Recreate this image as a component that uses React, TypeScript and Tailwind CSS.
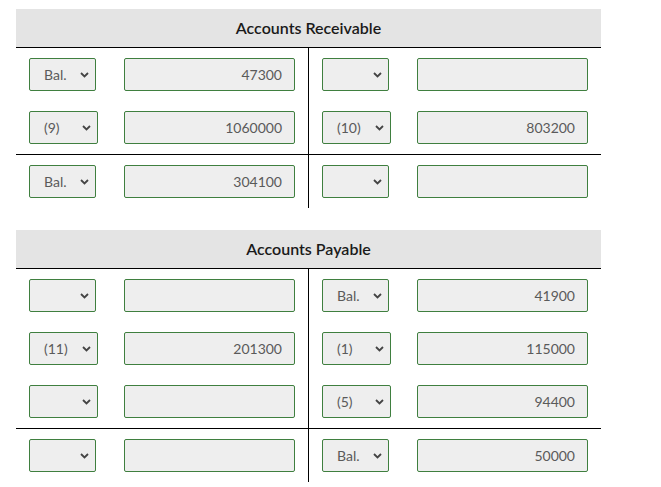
type Cell = { label: string; amount: string; wide?: boolean };
type Row = { left: Cell; right: Cell };

const empty: Cell = { label: '', amount: '' };

const receivable: Row[][] = [
  [
    { left: { label: 'Bal.', amount: '47300' }, right: empty },
    { left: { label: '(9)', amount: '1060000', wide: true }, right: { label: '(10)', amount: '803200', wide: true } },
  ],
  [{ left: { label: 'Bal.', amount: '304100' }, right: empty }],
];

const payable: Row[][] = [
  [
    { left: empty, right: { label: 'Bal.', amount: '41900' } },
    { left: { label: '(11)', amount: '201300', wide: true }, right: { label: '(1)', amount: '115000', wide: true } },
    { left: { ...empty, wide: true }, right: { label: '(5)', amount: '94400', wide: true } },
  ],
  [{ left: empty, right: { label: 'Bal.', amount: '50000' } }],
];

const Chevron = () => (
  <svg width="9" height="6" viewBox="0 0 9 6" className="shrink-0">
    <path d="M1 1l3.5 3.5L8 1" fill="none" stroke="#444" strokeWidth="1.8" />
  </svg>
);

const Entry = ({ cell }: { cell: Cell }) => (
  <div className="flex items-center justify-between">
    <div
      className={`flex h-[33px] items-center justify-between rounded-[2px] border border-[#3f7f3f] bg-[#eeeeee] pl-[14px] pr-[6px] text-[14px] text-[#5a5a5a] ${
        cell.wide ? 'w-[69px]' : 'w-[67px]'
      }`}
    >
      <span>{cell.label}</span>
      <Chevron />
    </div>
    <div className="flex h-[33px] w-[171px] items-center justify-end rounded-[2px] border border-[#3f7f3f] bg-[#eeeeee] pr-[12px] text-[14px] text-[#5a5a5a]">
      {cell.amount}
    </div>
  </div>
);

const TAccount = ({ title, blocks }: { title: string; blocks: Row[][] }) => (
  <div className="ml-[16px] w-[585px]">
    <div className="flex h-[38px] items-center justify-center bg-[#e4e4e4] text-[16px] font-semibold text-[#1a1a1a]">
      {title}
    </div>
    {blocks.map((rows, i) => (
      <div key={i} className="flex border-t border-black">
        <div className="flex w-[293px] flex-col gap-[20px] border-r border-black px-[13px] py-[10px]">
          {rows.map((row, j) => (
            <Entry key={j} cell={row.left} />
          ))}
        </div>
        <div className="flex w-[292px] flex-col gap-[20px] px-[13px] py-[10px]">
          {rows.map((row, j) => (
            <Entry key={j} cell={row.right} />
          ))}
        </div>
      </div>
    ))}
  </div>
);

export default function App() {
  return (
    <div className="flex min-h-[487px] w-[661px] flex-col gap-[22px] bg-white pt-[9px] font-['Lato','Liberation_Sans',sans-serif]">
      <TAccount title="Accounts Receivable" blocks={receivable} />
      <TAccount title="Accounts Payable" blocks={payable} />
    </div>
  );
}
